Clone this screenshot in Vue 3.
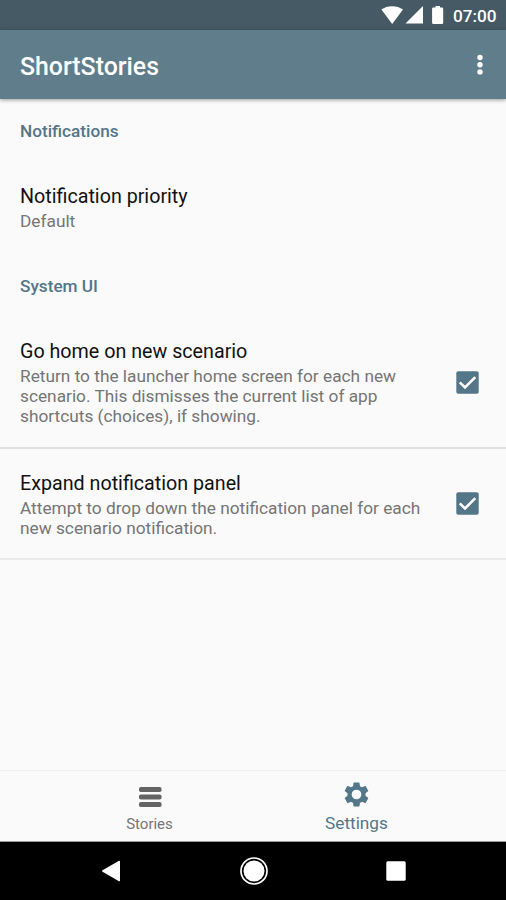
<script setup>
const sections = [
  {
    title: 'Notifications',
    items: [{ title: 'Notification priority', lines: ['Default'], kind: 'plain' }],
  },
  {
    title: 'System UI',
    items: [
      {
        title: 'Go home on new scenario',
        lines: [
          'Return to the launcher home screen for each new',
          'scenario. This dismisses the current list of app',
          'shortcuts (choices), if showing.',
        ],
        kind: 'check',
      },
      {
        title: 'Expand notification panel',
        lines: [
          'Attempt to drop down the notification panel for each',
          'new scenario notification.',
        ],
        kind: 'check last',
      },
    ],
  },
]
</script>

<template>
  <div class="screen">
    <div class="status">
      <svg class="status-icons" width="64" height="20" viewBox="0 0 64 20" fill="#fff">
        <path d="M.4 4.600C6.200.1 16.200.1 22 4.600L11.200 19z" />
        <path d="M42 1v17.500H24.500z" />
        <path d="M54.500 1h4.500v1.500h2q1.200 0 1.200 1.200v14.100q0 1.200-1.200 1.200h-8.700q-1.200 0-1.200-1.200V3.700q0-1.200 1.200-1.200h2.200z" />
      </svg>
      <span class="time">07:00</span>
    </div>

    <header class="toolbar">
      <h1>ShortStories</h1>
      <svg width="6" height="22" viewBox="0 0 6 22" fill="#fff">
        <circle cx="3" cy="3.500" r="2.700" />
        <circle cx="3" cy="10.700" r="2.700" />
        <circle cx="3" cy="17.900" r="2.700" />
      </svg>
    </header>

    <main class="content">
      <section v-for="section in sections" :key="section.title">
        <h2>{{ section.title }}</h2>
        <div v-for="item in section.items" :key="item.title" class="item" :class="item.kind">
          <div class="copy">
            <div class="item-title">{{ item.title }}</div>
            <div v-for="line in item.lines" :key="line" class="line">{{ line }}</div>
          </div>
          <svg v-if="item.kind !== 'plain'" class="box" width="23" height="23" viewBox="0 0 23 23">
            <rect x="0.300" y="0.300" width="22.400" height="22.400" rx="2" fill="#537688" />
            <path d="M3.800 11.300l5.200 5.200L19.300 6.200" fill="none" stroke="#fff" stroke-width="2.600" />
          </svg>
        </div>
      </section>
    </main>

    <nav class="tabs">
      <div class="tab stories">
        <svg width="24" height="22" viewBox="0 0 24 22" fill="#646464">
          <rect x="1" y="1" width="22.500" height="5" rx="1.800" />
          <rect x="1" y="8.500" width="22.500" height="5" rx="1.800" />
          <rect x="1" y="16" width="22.500" height="5" rx="1.800" />
        </svg>
        <span>Stories</span>
      </div>
      <div class="tab settings">
        <svg width="29" height="29" viewBox="0 0 24 24" fill="#537688" fill-rule="evenodd">
          <path d="M19.430 12.980c.04-.32.07-.64.07-.98s-.03-.66-.07-.98l2.110-1.650c.19-.15.24-.42.12-.64l-2-3.460c-.12-.22-.39-.3-.61-.22l-2.490 1c-.52-.4-1.080-.73-1.690-.98l-.38-2.650C14.460 2.180 14.250 2 14 2h-4c-.25 0-.46.18-.49.42l-.38 2.650c-.61.25-1.170.59-1.690.98l-2.490-1c-.23-.09-.49 0-.61.22l-2 3.460c-.13.22-.07.49.12.64l2.110 1.650c-.04.32-.07.65-.07.98s.03.66.07.98l-2.110 1.650c-.19.15-.24.42-.12.64l2 3.460c.12.22.39.3.61.22l2.490-1c.52.4 1.080.73 1.690.98l.38 2.650c.03.24.24.42.49.42h4c.25 0 .46-.18.49-.42l.38-2.650c.61-.25 1.170-.59 1.690-.98l2.490 1c.23.09.49 0 .61-.22l2-3.460c.12-.22.07-.49-.12-.64zM12 8a4 4 0 1 0 0 8 4 4 0 1 0 0-8z" />
        </svg>
        <span>Settings</span>
      </div>
    </nav>

    <footer class="system">
      <svg width="20" height="22" viewBox="0 0 20 22" fill="#fff"><path d="M18 .8Q19 .4 19 1.500v19q0 1.100-1 .7L1.500 11.800Q.5 11 1.500 10.200z" /></svg>
      <svg width="28" height="28" viewBox="0 0 28 28">
        <circle cx="14" cy="14" r="13" fill="none" stroke="#fff" stroke-width="1.700" />
        <circle cx="14" cy="14" r="10.500" fill="#fff" />
      </svg>
      <svg width="20" height="20" viewBox="0 0 20 20"><rect x=".3" y=".3" width="19.400" height="19.400" rx="1.500" fill="#fff" /></svg>
    </footer>
  </div>
</template>

<style>
body {
  margin: 0;
}
</style>

<style scoped>
.screen {
  width: 506px;
  height: 900px;
  display: flex;
  flex-direction: column;
  overflow: hidden;
  background: #fafafa;
  font-family: Roboto, sans-serif;
}
svg {
  display: block;
  flex: none;
}
.status {
  height: 30px;
  flex: none;
  box-sizing: border-box;
  padding: 5px 9px 0 0;
  display: flex;
  justify-content: flex-end;
  background: #455a64;
}
.time {
  width: 44px;
  margin-left: 8px;
  color: #fff;
  font-size: 17.200px;
  font-weight: 500;
  line-height: 22px;
  white-space: nowrap;
}
.toolbar {
  height: 69px;
  flex: none;
  box-sizing: border-box;
  padding: 0 23px 0 20px;
  display: flex;
  align-items: center;
  justify-content: space-between;
  background: #607d8b;
  box-shadow: 0 1px 4px rgba(0, 0, 0, 0.4);
}
h1 {
  margin: 4px 0 0;
  color: #fff;
  font-size: 24.850px;
  font-weight: 500;
  line-height: 30px;
}
.content {
  flex: 1;
  min-height: 0;
}
h2 {
  margin: 0;
  padding: 21px 20px 1px;
  color: #537688;
  font-size: 17.200px;
  font-weight: 500;
  line-height: 22px;
}
.item {
  box-sizing: border-box;
  padding: 0 27px 0 20px;
  display: flex;
  align-items: center;
  justify-content: space-between;
}
.plain {
  height: 111px;
  padding-top: 17px;
}
.check {
  border-bottom: 2px solid #e0e0e0;
}
section h2 + .check {
  height: 151px;
  padding-top: 19px;
}
.last {
  height: 111px;
  border-bottom-color: #ebebeb;
}
.last .copy {
  padding-top: 2px;
}
.item-title {
  color: #111;
  font-size: 19.700px;
  line-height: 26px;
  padding-bottom: 1px;
}
.line {
  color: #757575;
  font-size: 17.270px;
  line-height: 20px;
  white-space: nowrap;
}
.tabs {
  height: 72px;
  flex: none;
  box-sizing: border-box;
  border-top: 1px solid #efefef;
  border-bottom: 1px solid #999;
  padding: 0 46px;
  display: grid;
  grid-template-columns: 1fr 1fr;
}
.tab {
  display: flex;
  flex-direction: column;
  align-items: center;
}
.stories {
  padding-top: 15px;
  color: #757575;
  font-size: 15px;
}
.stories span {
  line-height: 18px;
  margin-top: 7px;
}
.settings {
  padding-top: 9px;
  color: #537688;
  font-size: 17.200px;
}
.settings span {
  line-height: 20px;
  margin-top: 4px;
}
.system {
  height: 58px;
  flex: none;
  box-sizing: border-box;
  padding: 0 100px 0 101px;
  display: flex;
  align-items: center;
  justify-content: space-between;
  background: #000;
}
</style>
